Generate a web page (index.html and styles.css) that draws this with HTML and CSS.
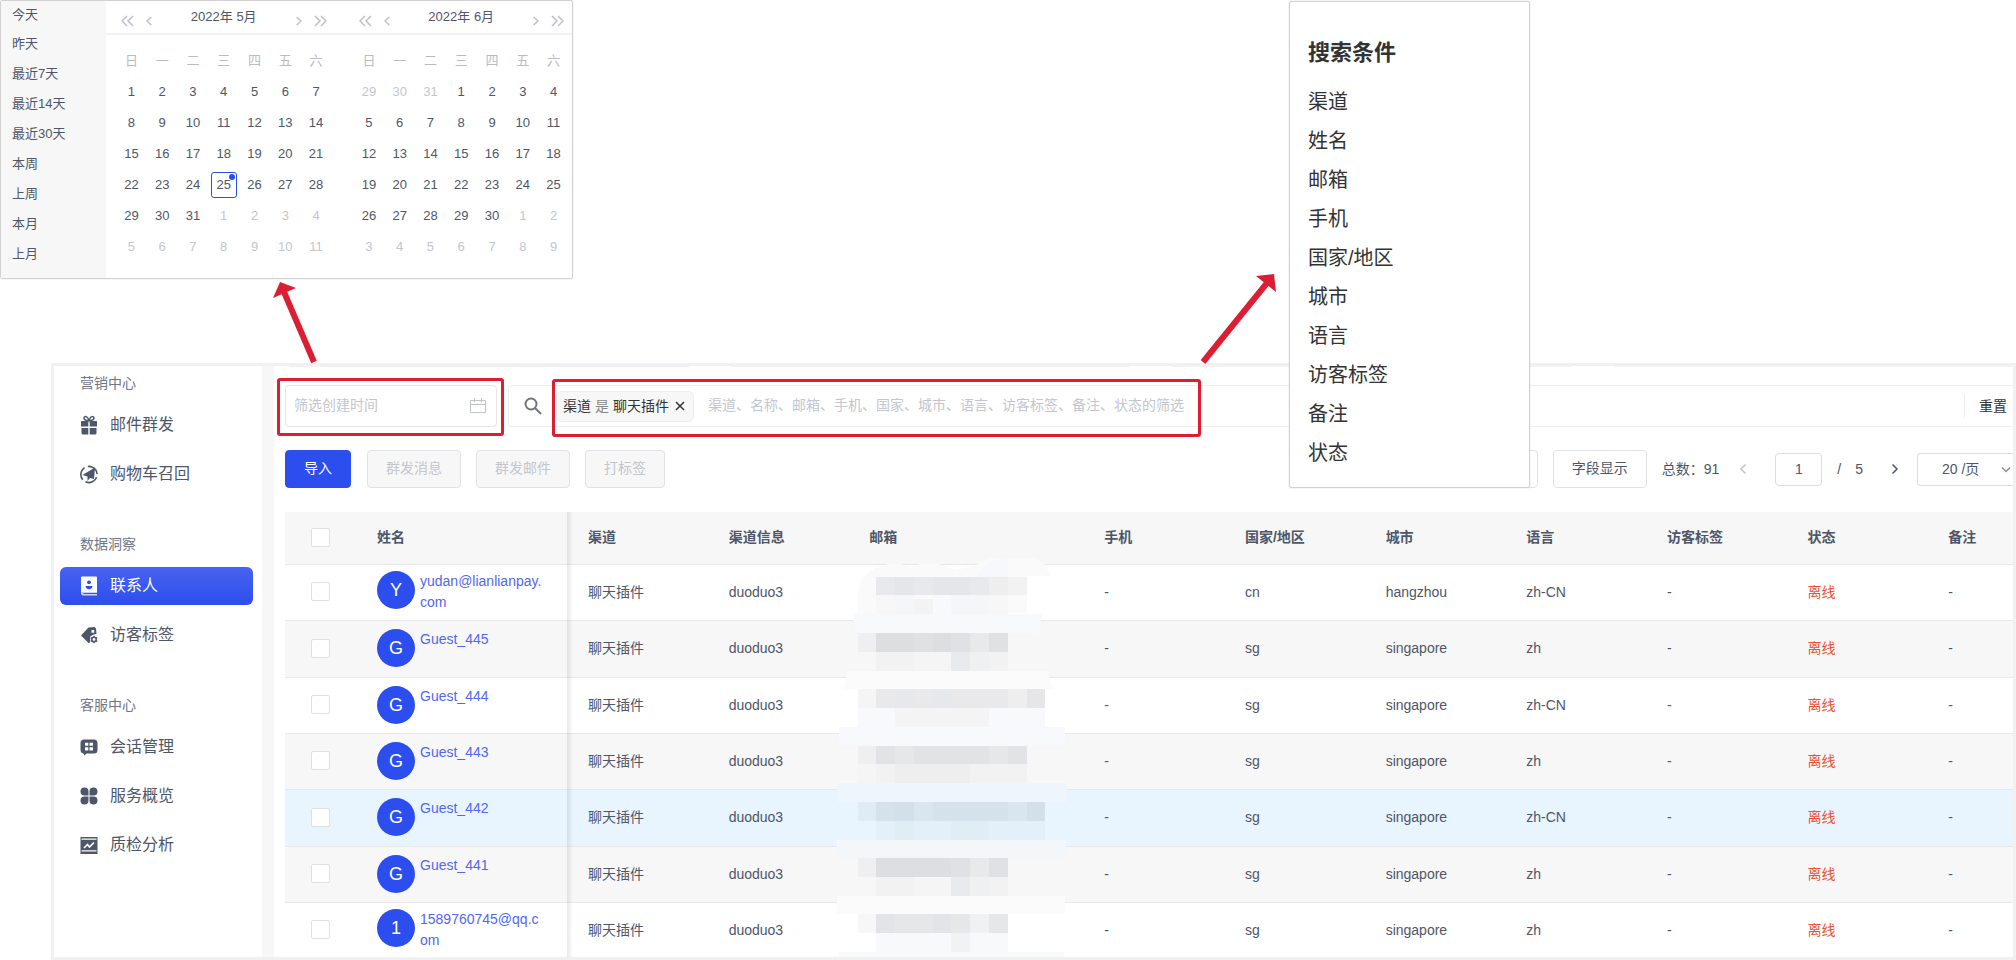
FILE: index.html
```html
<!DOCTYPE html>
<html lang="zh-CN">
<head>
<meta charset="utf-8">
<title>联系人</title>
<link rel="stylesheet" href="styles.css">
</head>
<body>
<div class="page">
  <div class="stage">
    <section class="picker" aria-label="日期选择">
      <ul class="shortcuts">
        <li>今天</li><li>昨天</li><li>最近7天</li><li>最近14天</li><li>最近30天</li><li>本周</li><li>上周</li><li>本月</li><li>上月</li>
      </ul>
      <div class="months">
        <div class="month-heads">
          <div class="month-head">
            <svg class="nav nav-double" viewBox="0 0 13 12"><path d="M6 1 1 6l5 5M12 1 7 6l5 5"/></svg>
            <svg class="nav" viewBox="0 0 6 12"><path d="M5.300 2 1 6l4.300 4"/></svg>
            <span class="month-name">2022年 5月</span>
            <svg class="nav" viewBox="0 0 6 12"><path d="M.7 2 5 6 .7 10"/></svg>
            <svg class="nav nav-double" viewBox="0 0 13 12"><path d="m1 1 5 5-5 5M7 1l5 5-5 5"/></svg>
          </div>
          <div class="month-head">
            <svg class="nav nav-double" viewBox="0 0 13 12"><path d="M6 1 1 6l5 5M12 1 7 6l5 5"/></svg>
            <svg class="nav" viewBox="0 0 6 12"><path d="M5.300 2 1 6l4.300 4"/></svg>
            <span class="month-name">2022年 6月</span>
            <svg class="nav" viewBox="0 0 6 12"><path d="M.7 2 5 6 .7 10"/></svg>
            <svg class="nav nav-double" viewBox="0 0 13 12"><path d="m1 1 5 5-5 5M7 1l5 5-5 5"/></svg>
          </div>
        </div>
        <div class="month-grids">
          <table class="days">
            <thead><tr><th>日</th><th>一</th><th>二</th><th>三</th><th>四</th><th>五</th><th>六</th></tr></thead>
            <tbody>
              <tr><td>1</td><td>2</td><td>3</td><td>4</td><td>5</td><td>6</td><td>7</td></tr>
              <tr><td>8</td><td>9</td><td>10</td><td>11</td><td>12</td><td>13</td><td>14</td></tr>
              <tr><td>15</td><td>16</td><td>17</td><td>18</td><td>19</td><td>20</td><td>21</td></tr>
              <tr><td>22</td><td>23</td><td>24</td><td><span class="today">25</span></td><td>26</td><td>27</td><td>28</td></tr>
              <tr><td>29</td><td>30</td><td>31</td><td class="out">1</td><td class="out">2</td><td class="out">3</td><td class="out">4</td></tr>
              <tr class="out"><td>5</td><td>6</td><td>7</td><td>8</td><td>9</td><td>10</td><td>11</td></tr>
            </tbody>
          </table>
          <table class="days">
            <thead><tr><th>日</th><th>一</th><th>二</th><th>三</th><th>四</th><th>五</th><th>六</th></tr></thead>
            <tbody>
              <tr><td class="out">29</td><td class="out">30</td><td class="out">31</td><td>1</td><td>2</td><td>3</td><td>4</td></tr>
              <tr><td>5</td><td>6</td><td>7</td><td>8</td><td>9</td><td>10</td><td>11</td></tr>
              <tr><td>12</td><td>13</td><td>14</td><td>15</td><td>16</td><td>17</td><td>18</td></tr>
              <tr><td>19</td><td>20</td><td>21</td><td>22</td><td>23</td><td>24</td><td>25</td></tr>
              <tr><td>26</td><td>27</td><td>28</td><td>29</td><td>30</td><td class="out">1</td><td class="out">2</td></tr>
              <tr class="out"><td>3</td><td>4</td><td>5</td><td>6</td><td>7</td><td>8</td><td>9</td></tr>
            </tbody>
          </table>
        </div>
      </div>
    </section>
  </div>

  <div class="app">
    <nav class="sidebar">
      <section class="menu">
        <h2 class="menu-title">营销中心</h2>
        <a class="menu-item" href="#">
          <svg class="icon" viewBox="0 0 18 20"><path fill="currentColor" d="M1.500 6h6.800v5.500H1V6.500zM9.700 6h6.800l.5.5v5H9.700zM1.500 13h6.800v6.500H2.500l-1-1zM9.700 13h6.800v5.500l-1 1H9.700z"/><path fill="none" stroke="currentColor" stroke-width="1.500" d="M9 5.500C7 5.500 4 5 4 3s3.500-2.500 5 2.500C10.500.500 14 1 14 3s-3 2.500-5 2.500z"/></svg>
          邮件群发</a>
        <a class="menu-item" href="#">
          <svg class="icon" viewBox="0 0 18 20"><circle cx="9" cy="10.500" r="8.100" fill="none" stroke="currentColor" stroke-width="1.600" stroke-dasharray="13.500 3.450" transform="rotate(20 9 10.500)"/><path fill="currentColor" d="M15 3.500 2.500 11l5 1.500V17l2.500-3 4 1z"/></svg>
          购物车召回</a>
      </section>
      <section class="menu">
        <h2 class="menu-title">数据洞察</h2>
        <a class="menu-item active" href="#">
          <svg class="icon" viewBox="0 0 18 20"><path fill="#fff" d="M2 .5h14a1 1 0 0 1 1 1V16H1V1.500a1 1 0 0 1 1-1z"/><path fill="#c9d1fb" d="M1 16h16v1H3.500v1H17v1.500H2.500L1 18z"/><circle cx="9" cy="6.300" r="1.900" fill="#2d4eee"/><path fill="#2d4eee" d="M5.500 10h7c0 2-1.500 3.200-3.500 3.200S5.500 12 5.500 10z"/></svg>
          联系人</a>
        <a class="menu-item" href="#">
          <svg class="icon" viewBox="0 0 18 20"><path fill="currentColor" fill-rule="evenodd" d="M8.500 2.500 14.500 2 16 3.500l.5 5.500-3 .5-3.300 2-.2 6-1.500.5-7.500-7.500zM11.500 5v2.800h2.700V5z"/><circle cx="14" cy="14.500" r="2.200" fill="none" stroke="currentColor" stroke-width="1.500"/><path stroke="currentColor" stroke-width="1.500" d="M14 10.800v1.500M14 16.700v1.500M10.800 12.600l1.300.8M15.900 15.600l1.300.8M17.200 12.600l-1.300.8M12.100 15.600l-1.300.8"/></svg>
          访客标签</a>
      </section>
      <section class="menu">
        <h2 class="menu-title">客服中心</h2>
        <a class="menu-item" href="#">
          <svg class="icon" viewBox="0 0 18 20"><path fill="currentColor" fill-rule="evenodd" d="M4 2.500h10q3.500 0 3.500 3.500v7q0 3.500-3.500 3.500H6.500l-2 2-1-2Q.5 16 .5 13V6Q.5 2.500 4 2.500zM5 5.800v3h3.300v-3zm4.500 0v3H13v-3zM5 10.200v3.300h3.300v-3.300zm4.500 0v3.300H13v-3.300z"/></svg>
          会话管理</a>
        <a class="menu-item" href="#">
          <svg class="icon" viewBox="0 0 18 20"><path fill="currentColor" d="M4.500 1.500a4 4 0 0 1 4 4v4h-4a4 4 0 0 1 0-8zM13.500 1.500a4 4 0 0 1 0 8h-4v-4a4 4 0 0 1 4-4zM4.500 10.500h4v4a4 4 0 1 1-4-4zM9.500 10.500h4a4 4 0 1 1-4 4z"/></svg>
          服务概览</a>
        <a class="menu-item" href="#">
          <svg class="icon" viewBox="0 0 18 20"><path fill="currentColor" d="M.5 2h17v1.500H.5zM.5 3h1v14h-1zM16.500 3h1v14h-1zM.5 16.500h17V19H.5zM1.500 4.800h15v10.500h-15z"/><path fill="none" stroke="#fff" stroke-width="1.600" d="m4 13 3.500-3.500 2 2.500L14 7.500"/></svg>
          质检分析</a>
      </section>
    </nav>

    <main class="content">
      <div class="stats"><span class="stat current"></span><span class="stat"></span><span class="stat"></span><span class="stat"></span></div>
      <div class="filters">
        <div class="date-filter">
          <input class="date-input" type="text" placeholder="筛选创建时间" aria-label="筛选创建时间">
          <svg class="date-icon" viewBox="0 0 16 16"><path d="M.5 2.500h15v12H.5zM.5 6.500h15M4.500 0v4M11.500 0v4"/></svg>
          <span class="mark mark-date"></span>
        </div>
        <div class="search">
          <svg class="search-icon" viewBox="0 0 18 18"><circle cx="7" cy="7" r="5.500"/><path d="m11 11 6 6"/></svg>
          <div class="search-main">
            <span class="tag">渠道 <i class="tag-op">是</i> 聊天插件
              <button class="tag-close" type="button" aria-label="移除"><svg viewBox="0 0 10 10"><path d="m1 1 8 8M9 1 1 9"/></svg></button></span>
            <input class="search-input" type="text" placeholder="渠道、名称、邮箱、手机、国家、城市、语言、访客标签、备注、状态的筛选" aria-label="搜索">
            <span class="mark mark-search"></span>
          </div>
          <button class="reset" type="button">重置</button>
        </div>
      </div>

      <div class="toolbar">
        <button class="btn primary" type="button">导入</button>
        <button class="btn" type="button" disabled>群发消息</button>
        <button class="btn" type="button" disabled>群发邮件</button>
        <button class="btn" type="button" disabled>打标签</button>
        <button class="btn push" type="button">导出</button>
        <button class="btn" type="button">字段显示</button>
        <div class="pager">
          <span>总数：91</span>
          <button class="page-nav prev" type="button" aria-label="上一页"><svg viewBox="0 0 8 12"><path d="M6.500 1.500 2 6l4.500 4.500"/></svg></button>
          <input class="page-no" type="text" value="1" aria-label="页码">
          <span class="slash">/</span><span class="page-count">5</span>
          <button class="page-nav" type="button" aria-label="下一页"><svg viewBox="0 0 8 12"><path d="M1.500 1.500 6 6l-4.500 4.500"/></svg></button>
          <div class="size-box">
            <select class="page-size" aria-label="每页数量"><option>20 /页</option></select>
            <svg class="size-arrow" viewBox="0 0 10 8"><path d="m1 1.500 4 4 4-4"/></svg>
          </div>
        </div>
      </div>

      <div class="table-box">
        <table class="contacts">
          <colgroup><col class="c-check"><col class="c-name"><col><col><col class="c-mail"><col><col><col><col><col><col><col></colgroup>
          <thead>
            <tr><th class="pick"><input type="checkbox" aria-label="全选"></th><th class="name">姓名</th><th>渠道</th><th>渠道信息</th><th>邮箱</th><th>手机</th><th>国家/地区</th><th>城市</th><th>语言</th><th>访客标签</th><th>状态</th><th>备注</th></tr>
          </thead>
          <tbody>
            <tr><td class="pick"><input type="checkbox" aria-label="选择 yudan"></td><td class="name"><div class="person"><span class="avatar">Y</span><a href="#">yudan@lianlianpay.com</a></div></td><td>聊天插件</td><td>duoduo3</td><td></td><td>-</td><td>cn</td><td>hangzhou</td><td>zh-CN</td><td>-</td><td class="offline">离线</td><td>-</td></tr>
            <tr><td class="pick"><input type="checkbox" aria-label="选择 Guest_445"></td><td class="name"><div class="person"><span class="avatar">G</span><a href="#">Guest_445</a></div></td><td>聊天插件</td><td>duoduo3</td><td></td><td>-</td><td>sg</td><td>singapore</td><td>zh</td><td>-</td><td class="offline">离线</td><td>-</td></tr>
            <tr><td class="pick"><input type="checkbox" aria-label="选择 Guest_444"></td><td class="name"><div class="person"><span class="avatar">G</span><a href="#">Guest_444</a></div></td><td>聊天插件</td><td>duoduo3</td><td></td><td>-</td><td>sg</td><td>singapore</td><td>zh-CN</td><td>-</td><td class="offline">离线</td><td>-</td></tr>
            <tr><td class="pick"><input type="checkbox" aria-label="选择 Guest_443"></td><td class="name"><div class="person"><span class="avatar">G</span><a href="#">Guest_443</a></div></td><td>聊天插件</td><td>duoduo3</td><td></td><td>-</td><td>sg</td><td>singapore</td><td>zh</td><td>-</td><td class="offline">离线</td><td>-</td></tr>
            <tr class="hovered"><td class="pick"><input type="checkbox" aria-label="选择 Guest_442"></td><td class="name"><div class="person"><span class="avatar">G</span><a href="#">Guest_442</a></div></td><td>聊天插件</td><td>duoduo3</td><td></td><td>-</td><td>sg</td><td>singapore</td><td>zh-CN</td><td>-</td><td class="offline">离线</td><td>-</td></tr>
            <tr><td class="pick"><input type="checkbox" aria-label="选择 Guest_441"></td><td class="name"><div class="person"><span class="avatar">G</span><a href="#">Guest_441</a></div></td><td>聊天插件</td><td>duoduo3</td><td></td><td>-</td><td>sg</td><td>singapore</td><td>zh</td><td>-</td><td class="offline">离线</td><td>-</td></tr>
            <tr><td class="pick"><input type="checkbox" aria-label="选择 1589760745"></td><td class="name"><div class="person"><span class="avatar">1</span><a href="#">1589760745@qq.com</a></div></td><td>聊天插件</td><td>duoduo3</td><td></td><td>-</td><td>sg</td><td>singapore</td><td>zh</td><td>-</td><td class="offline">离线</td><td>-</td></tr>
          </tbody>
        </table>
        <svg class="mosaic" viewBox="48 54 720 1197" shape-rendering="crispEdges">
          <path fill="#fafafa" d="M113 222v-75q8-35 50-62 55-25 110-4 60-26 135 9 30-10 60-12 25-24 60-24h110q40 8 50 54H620v112z"/>
          <path fill="#f7f8fb" d="M470 110q25-50 94-55v55z"/>
          <path fill="#e8e9ec" d="M169 110h338v55H169z"/><path fill="#e5e6ea" d="M226 110h56v55h-56zM339 110h110v55H339z"/>
          <path fill="#eeeeee" d="M507 110h57v55h-57z"/><path fill="#f2f2f2" d="M564 110h56v55h-56z"/>
          <path fill="#f7f7f7" d="M169 165h56v57h-56zM507 165h57v57h-57z"/><path fill="#f5f6f8" d="M226 165h56v57h-56zM394 165h113v57H394z"/><path fill="#f3f3f3" d="M282 178h57v44h-57z"/><path fill="#f7f9fd" d="M339 165h55v57h-55z"/>
          <path fill="#f8f9fb" d="M101 222h565l-8 57H101z"/>

          <path fill="#efeff1" d="M113 279h56v56h-56z"/><path fill="#dddee2" d="M169 279h113v56H169zM339 279h55v56h-55z"/><path fill="#e0e1e5" d="M282 279h57v56h-57zM394 279h55v56h-55zM507 279h57v56h-57z"/><path fill="#e8e9eb" d="M449 279h58v56h-58z"/>
          <path fill="#f2f2f2" d="M169 335h113v57H169zM507 335h57v57h-57z"/><path fill="#f5f5f5" d="M282 335h112v57H282z"/><path fill="#e9eaed" d="M394 335h55v57h-55z"/><path fill="#eff0f2" d="M449 335h58v57h-58z"/>
          <path fill="#fbfbfb" d="M82 392h600l16 55H72z"/>

          <path fill="#f5f5f5" d="M113 447h56v57h-56z"/><path fill="#e9e9eb" d="M169 447h395v57H169z"/><path fill="#e7e8ec" d="M226 447h56v57h-56zM339 447h55v57h-55z"/><path fill="#eeeeee" d="M564 447h56v57h-56z"/><path fill="#e6e6e8" d="M620 447h55v57h-55z"/>
          <path fill="#f8f9fc" d="M113 504h562v57H113z"/><path fill="#f4f4f4" d="M226 504h281v57H226z"/>
          <path fill="#f8f9fc" d="M57 561h678v55H57z"/>

          <path fill="#efefef" d="M113 617h56v56h-56z"/><path fill="#e2e3e7" d="M169 617h451v56H169z"/><path fill="#e6e7e9" d="M226 617h56v56h-56zM507 617h57v56h-57z"/>
          <path fill="#f5f5f6" d="M113 673h56v57h-56z"/><path fill="#f2f2f2" d="M169 673h451v57H169z"/><path fill="#eeeeee" d="M226 673h223v57H226z"/>
          <path fill="#eef5fc" d="M51 730h690v56H51z"/>

          <path fill="#dfecf5" d="M113 786h56v57h-56z"/><path fill="#d6e2eb" d="M169 786h506v57H169z"/><path fill="#d3e0e9" d="M226 786h56v57h-56zM620 786h55v57h-55z"/><path fill="#d9e6ef" d="M282 786h57v57h-57zM564 786h56v57h-56z"/>
          <path fill="#e3f0f9" d="M169 843h506v56H169z"/><path fill="#dfedf5" d="M226 843h56v56h-56zM394 843h113v56H394z"/>
          <path fill="#f3f7fa" d="M51 899h687v55H51z"/>

          <path fill="#efeff1" d="M113 954h56v57h-56z"/><path fill="#dddee2" d="M169 954h225v57H169z"/><path fill="#e0e1e5" d="M394 954h55v57h-55zM507 954h57v57h-57z"/><path fill="#e8e9eb" d="M449 954h58v57h-58z"/>
          <path fill="#f2f2f2" d="M169 1011h113v57H169zM507 1011h57v57h-57z"/><path fill="#f5f5f5" d="M282 1011h112v57H282z"/><path fill="#e9eaed" d="M394 1011h55v57h-55z"/><path fill="#eff0f2" d="M449 1011h58v57h-58z"/>
          <path fill="#fbfbfb" d="M51 1068h683v55H51z"/>

          <path fill="#f7f7f7" d="M113 1123h56v57h-56z"/><path fill="#e3e4e8" d="M169 1123h57v57h-57zM339 1123h55v57h-55z"/><path fill="#e6e7e9" d="M226 1123h113v57H226zM394 1123h55v57h-55zM507 1123h57v57h-57z"/><path fill="#f0f1f3" d="M449 1123h58v57h-58z"/>
          <path fill="#f8f9fc" d="M169 1180h395v56H169z"/><path fill="#f2f2f4" d="M394 1180h55v56h-55z"/>
          <path fill="#f8f9fb" d="M57 1236h674v15H57z"/>
        </svg>
      </div>
    </main>
  </div>

  <section class="conditions">
    <h2 class="conditions-title">搜索条件</h2>
    <ul class="conditions-list">
      <li>渠道</li><li>姓名</li><li>邮箱</li><li>手机</li><li>国家/地区</li><li>城市</li><li>语言</li><li>访客标签</li><li>备注</li><li>状态</li>
    </ul>
  </section>

  <svg class="arrow arrow-left" viewBox="0 0 50 84"><path d="M42 82 12 12" stroke="#dc1e35" stroke-width="6"/><path d="m8 2 16 6L1 18z" fill="#dc1e35"/></svg>
  <svg class="arrow arrow-right" viewBox="0 0 80 92"><path d="M3 90 67 11" stroke="#dc1e35" stroke-width="6"/><path d="M74 2 56 4l20 16z" fill="#dc1e35"/></svg>
</div>
</body>
</html>
```
FILE: styles.css
```css
* { box-sizing: border-box; }

body {
  margin: 0;
  background: #fff;
  color: #4e5669;
  font: 14px/20px "Liberation Sans", "Noto Sans CJK SC", sans-serif;
}

h2, ul { margin: 0; padding: 0; list-style: none; }
a { color: inherit; text-decoration: none; }
svg { display: block; flex: none; }
button, input, select { font: inherit; color: inherit; margin: 0; padding: 0; }
button { background: none; border: 0; }
input::placeholder { color: #c3c6cd; opacity: 1; }

.page {
  position: relative;
  display: flex;
  flex-direction: column;
  height: 100vh;
  min-height: 960px;
  overflow: hidden;
}

.stage { display: flex; padding: 0 0 84px; }

/* date range picker */
.picker {
  display: flex;
  width: 573px;
  height: 279px;
  border: 1px solid #d2d2d2;
  border-radius: 2px;
  box-shadow: 0 0 2px #ddd;
  font-size: 13px;
}
.shortcuts { width: 105px; background: #f7f7f7; line-height: 30px; padding-left: 11px; }
.shortcuts li:first-child { line-height: 28px; }
.months { flex: 1; }
.month-heads, .month-grids {
  display: flex;
  gap: 22px;
  padding: 0 3px 0 10px;
}
.month-heads { height: 34px; border-bottom: 2px solid #f3f3f3; }
.month-head {
  flex: 1;
  display: flex;
  align-items: center;
  gap: 12px;
  padding: 0 5px;
}
.month-name { flex: 1; text-align: center; line-height: 30px; }
.nav { width: 6px; height: 12px; margin-top: 8px; fill: none; stroke: #bdc0c7; stroke-width: 1.500; }
.nav-double { width: 13px; }
.month-grids { padding-top: 10px; }
.days { flex: 1; width: 0; table-layout: fixed; border-collapse: collapse; text-align: center; }
.days th, .days td { height: 31px; padding: 0; }
.days th { color: #b9bcc3; font-weight: 400; }
.days .out { color: #c3c6cd; }
.today {
  position: relative;
  display: block;
  width: 26px;
  margin: 0 auto;
  line-height: 24px;
  border: 1px solid #2d4eee;
  border-radius: 3px;
}
.today::after {
  content: "";
  position: absolute;
  top: 1px;
  right: 1px;
  width: 6px;
  height: 6px;
  border-radius: 50%;
  background: #2d4eee;
}

/* application frame */
.app {
  flex: 1;
  min-height: 0;
  display: flex;
  margin-left: 51px;
  border: 3px solid #f1f1f1;
  overflow: hidden;
}
.sidebar {
  flex: none;
  width: 220px;
  border-right: 12px solid #f7f7f7;
  padding: 7px 9px 0 6px;
  display: flex;
  flex-direction: column;
  gap: 41px;
}
.menu { display: flex; flex-direction: column; gap: 11px; }
.menu-title { font-size: 14px; font-weight: 400; line-height: 20px; color: #6f7687; padding-left: 20px; margin-bottom: 2px; }
.menu-item {
  display: flex;
  align-items: center;
  gap: 12px;
  height: 38px;
  padding-left: 20px;
  border-radius: 6px;
  font-size: 16px;
}
.menu-item.active { color: #fff; background: linear-gradient(#4763f0, #2d4eee); }
.icon { width: 18px; height: 20px; }

.content { flex: 1; min-width: 0; padding-left: 11px; overflow: hidden; }
.stats { display: flex; gap: 42px; height: 1px; padding-left: 4px; }
.stat { flex: 1; background: #f3f3f4; }
.stat.current { background: #eff1fd; }

/* filters */
.filters { display: flex; gap: 11px; margin-top: 18px; height: 42px; }
.date-filter { position: relative; width: 212px; }
.date-input {
  width: 100%;
  height: 42px;
  padding: 0 36px 2px 8px;
  border: 1px solid #e4e4e6;
  border-radius: 4px;
  outline: 0;
}
.date-icon { position: absolute; top: 13px; right: 11px; width: 16px; height: 16px; fill: none; stroke: #bfc2c9; }
.mark { position: absolute; border: 3px solid #dc1e35; border-radius: 3px; pointer-events: none; }
.mark-date { inset: -7px -7px -9px -8px; }
.search {
  flex: 1;
  display: flex;
  align-items: center;
  border: 1px solid #eee;
  border-right: 0;
  border-radius: 4px 0 0 4px;
  padding-left: 15px;
}
.search-icon { width: 18px; height: 18px; fill: none; stroke: #70757f; stroke-width: 2; }
.search-main { position: relative; display: flex; align-items: center; width: 657px; height: 40px; padding-left: 14px; margin-right: auto; }
.mark-search { inset: -7px -2px -11px 10px; }
.tag {
  flex: none;
  display: flex;
  align-items: center;
  gap: 4px;
  height: 31px;
  padding: 0 8px 0 6px;
  background: #f7f7f7;
  border: 1px solid #eee;
  border-radius: 5px;
  color: #333;
}
.tag-op { font-style: normal; color: #888; }
.tag-close { width: 10px; height: 10px; margin-left: 2px; }
.tag-close svg { width: 10px; height: 10px; fill: none; stroke: #333; stroke-width: 1.500; }
.search-input { flex: 1; min-width: 0; height: 36px; margin-left: 14px; padding-bottom: 2px; border: 0; outline: 0; background: none; }
.reset { height: 24px; padding: 0 6px 0 14px; border-left: 1px solid #eee; color: #333; }

/* toolbar */
.toolbar { display: flex; gap: 15px; margin-top: 23px; height: 38px; white-space: nowrap; }
.btn { padding: 0 18px 2px; background: #fff; border: 1px solid #e1e2e5; border-radius: 4px; }
.btn:disabled { color: #c3c6cd; background: #f7f7f7; }
.btn.primary { color: #fff; background: #2d4eee; border-color: #2d4eee; margin-right: 1px; }
.btn.push { margin-left: auto; }
.pager { display: flex; align-items: center; }
.page-nav { width: 8px; height: 12px; color: #4e5669; margin: 0 18px 0 28px; }
.page-nav.prev { color: #bfc2c9; margin: 0 28px 0 20px; }
.page-nav svg { width: 8px; height: 12px; fill: none; stroke: currentColor; stroke-width: 1.500; }
.page-no { width: 47px; height: 33px; text-align: center; border: 1px solid #dcdde0; border-radius: 4px; outline: 0; }
.slash { margin-left: 15px; }
.page-count { margin-left: 14px; }
.size-box { position: relative; width: 96px; }
.page-size {
  appearance: none;
  width: 100%;
  height: 33px;
  padding-left: 24px;
  background: #fff;
  border: 1px solid #dcdde0;
  border-right: 0;
  border-radius: 4px 0 0 4px;
  outline: 0;
}
.size-arrow { position: absolute; right: 2px; top: 13px; width: 10px; height: 8px; fill: none; stroke: #8b909c; stroke-width: 1.500; }

/* contacts table */
.table-box { position: relative; margin-top: 24px; }
.contacts { width: calc(100% + 56px); table-layout: fixed; border-collapse: separate; border-spacing: 0; text-align: left; }
.c-check { width: 72px; }
.c-name { width: 211px; }
.c-mail { width: 235px; }
.contacts th, .contacts td { height: 56px; padding: 0 20px 2px; border-bottom: 1px solid #e9e9eb; }
.contacts th { height: 53px; background: #f7f7f7; }
.contacts tbody tr:nth-child(even) { background: #f7f7f7; }
.contacts tbody tr:nth-child(3n+2) td { height: 57px; }
.contacts tbody tr.hovered { background: #e8f5fe; }
.contacts .pick { padding: 0 0 2px 26px; }
.pick input {
  appearance: none;
  display: block;
  width: 19px;
  height: 19px;
  background: #fff;
  border: 1px solid #dfe0e3;
  border-radius: 2px;
}
.contacts .name { position: relative; padding-right: 24px; }
.contacts .name::after {
  content: "";
  position: absolute;
  top: 0;
  bottom: -1px;
  right: -5px;
  width: 6px;
  background: linear-gradient(90deg, rgba(0, 0, 0, .09), rgba(0, 0, 0, 0));
}
.person { display: flex; gap: 5px; line-height: 21px; color: #5267f0; word-break: break-all; }
.avatar {
  flex: none;
  width: 38px;
  height: 38px;
  border-radius: 50%;
  background: #2d4eee;
  color: #fff;
  font-size: 18px;
  line-height: 38px;
  text-align: center;
}
.contacts .offline { color: #f0522f; }
.mosaic { position: absolute; left: 551px; top: 46px; width: 240px; height: 399px; pointer-events: none; }

/* search conditions popover */
.conditions {
  position: absolute;
  left: 1289px;
  top: 1px;
  width: 241px;
  height: 487px;
  padding: 35px 18px;
  background: #fff;
  border: 1px solid #d2d2d2;
  border-radius: 2px;
  box-shadow: 0 0 2px #ddd;
  color: #333;
}
.conditions-title { font-size: 22px; line-height: 32px; margin-bottom: 14px; }
.conditions-list { font-size: 20px; line-height: 39px; }

.arrow { position: absolute; }
.arrow-left { left: 272px; top: 280px; width: 50px; height: 84px; }
.arrow-right { left: 1200px; top: 272px; width: 80px; height: 92px; }
```
